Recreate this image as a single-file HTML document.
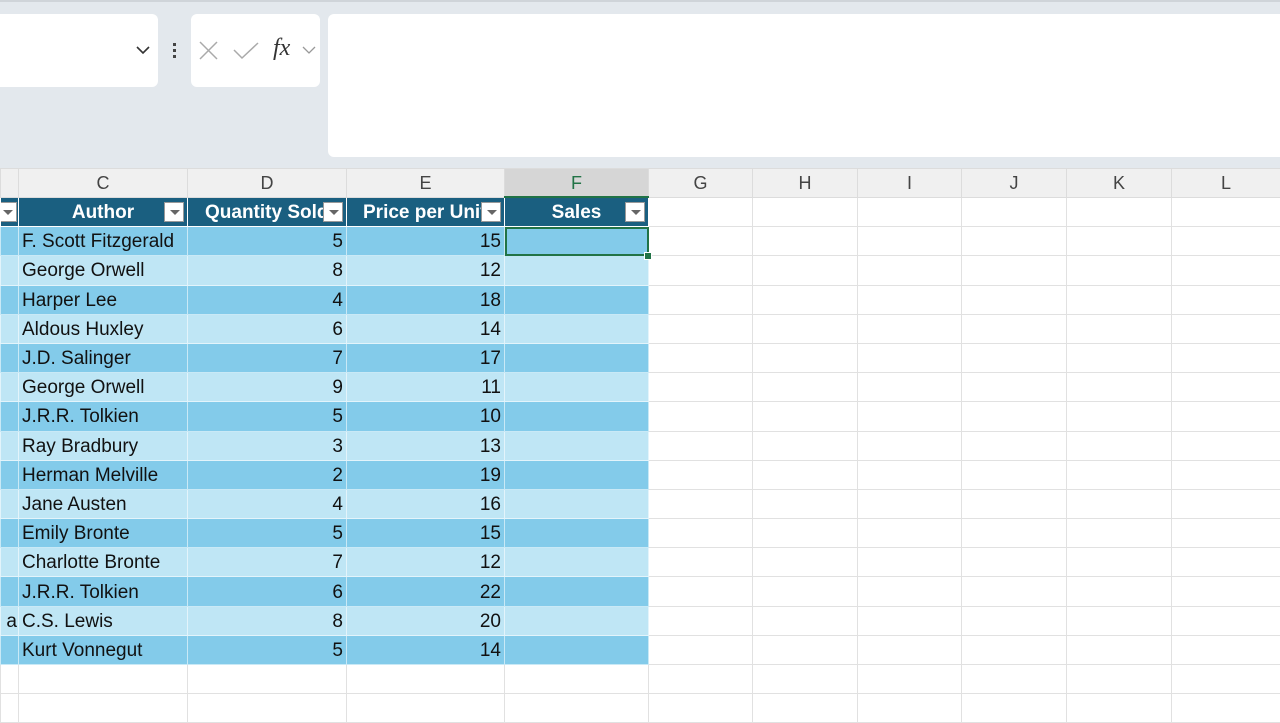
<!DOCTYPE html>
<html><head><meta charset="utf-8"><style>
body{margin:0;width:1280px;height:720px;overflow:hidden;background:#e3e8ed;font-family:"Liberation Sans",sans-serif;position:relative}
.box{position:absolute;background:#fff;border-radius:6px}
table{position:absolute;left:0;top:168px;border-collapse:collapse;table-layout:fixed;width:1280px;background:#fff}
td{padding:2px 3px 0;height:26.2px;border:1px solid #e1e1e1;font-size:19px;white-space:nowrap;overflow:hidden;color:#111}
tr.ch td{background:#f0f0f0;color:#444;text-align:center;font-size:18px;height:25px;border-color:#dcdcdc}
tr.ch td.sel{background:#d6d6d6;color:#217346;border-bottom:2px solid #217346}
tr.h td.t{background:#1a5f80;color:#fff;font-weight:bold;text-align:center;position:relative;border-color:#fff}
.fb{position:absolute;right:3px;top:4px;width:20px;height:20px;background:#fff;border:1px solid #999;box-sizing:border-box}
.fb:after{content:"";position:absolute;left:5px;top:7px;border-left:5px solid transparent;border-right:5px solid transparent;border-top:5px solid #666}
tr.a td.t{background:#83cbea;border-color:#c9e9f6}
tr.b td.t{background:#bfe6f5;border-color:#e3f4fb}
td.r{text-align:right}
</style></head><body>
<div style="position:absolute;left:0;top:0;width:1280px;height:2px;background:#cfd4d9"></div>
<div class="box" style="left:-10px;top:14px;width:168px;height:73px"></div>
<svg style="position:absolute;left:135px;top:44px" width="16" height="12"><path d="M2 3l6 6 6-6" fill="none" stroke="#333" stroke-width="1.6"/></svg>
<div style="position:absolute;left:173px;top:43px;width:3px;height:3px;background:#444;box-shadow:0 6px 0 #444,0 12px 0 #444"></div>
<div class="box" style="left:191px;top:14px;width:129px;height:73px"></div>
<svg style="position:absolute;left:198px;top:40px" width="24" height="22"><path d="M2 2l17 17M19 2L2 19" stroke="#aaa" stroke-width="1.5"/></svg>
<svg style="position:absolute;left:232px;top:40px" width="28" height="22"><path d="M2 10l8 8L26 3" fill="none" stroke="#aaa" stroke-width="1.5"/></svg>
<div style="position:absolute;left:273px;top:35px;font-family:'Liberation Serif',serif;font-style:italic;font-size:24px;color:#333">fx</div>
<svg style="position:absolute;left:302px;top:45px" width="14" height="10"><path d="M1 2l6 6 6-6" fill="none" stroke="#999" stroke-width="1.3"/></svg>
<div class="box" style="left:328px;top:14px;width:970px;height:143px"></div>
<table>
<colgroup><col style="width:18px"><col style="width:169px"><col style="width:159px"><col style="width:158px"><col style="width:144px"><col style="width:104px"><col style="width:105px"><col style="width:104px"><col style="width:105px"><col style="width:105px"><col style="width:109px"></colgroup>
<tr class="ch"><td></td><td>C</td><td>D</td><td>E</td><td class="sel">F</td><td>G</td><td>H</td><td>I</td><td>J</td><td>K</td><td>L</td></tr>
<tr class="h"><td class="t"><div class="fb" style="right:1px"></div></td><td class="t">Author<div class="fb"></div></td><td class="t" style="text-align:left;padding-left:17px">Quantity Sold<div class="fb"></div></td><td class="t" style="text-align:left;padding-left:16px">Price per Unit<div class="fb"></div></td><td class="t">Sales<div class="fb"></div></td><td></td><td></td><td></td><td></td><td></td><td></td></tr>
<tr class="a"><td class="t"></td><td class="t">F. Scott Fitzgerald</td><td class="t r">5</td><td class="t r">15</td><td class="t" style="outline:2px solid #217346;outline-offset:-2px"></td><td></td><td></td><td></td><td></td><td></td><td></td></tr>
<tr class="b"><td class="t"></td><td class="t">George Orwell</td><td class="t r">8</td><td class="t r">12</td><td class="t"></td><td></td><td></td><td></td><td></td><td></td><td></td></tr>
<tr class="a"><td class="t"></td><td class="t">Harper Lee</td><td class="t r">4</td><td class="t r">18</td><td class="t"></td><td></td><td></td><td></td><td></td><td></td><td></td></tr>
<tr class="b"><td class="t"></td><td class="t">Aldous Huxley</td><td class="t r">6</td><td class="t r">14</td><td class="t"></td><td></td><td></td><td></td><td></td><td></td><td></td></tr>
<tr class="a"><td class="t"></td><td class="t">J.D. Salinger</td><td class="t r">7</td><td class="t r">17</td><td class="t"></td><td></td><td></td><td></td><td></td><td></td><td></td></tr>
<tr class="b"><td class="t"></td><td class="t">George Orwell</td><td class="t r">9</td><td class="t r">11</td><td class="t"></td><td></td><td></td><td></td><td></td><td></td><td></td></tr>
<tr class="a"><td class="t"></td><td class="t">J.R.R. Tolkien</td><td class="t r">5</td><td class="t r">10</td><td class="t"></td><td></td><td></td><td></td><td></td><td></td><td></td></tr>
<tr class="b"><td class="t"></td><td class="t">Ray Bradbury</td><td class="t r">3</td><td class="t r">13</td><td class="t"></td><td></td><td></td><td></td><td></td><td></td><td></td></tr>
<tr class="a"><td class="t"></td><td class="t">Herman Melville</td><td class="t r">2</td><td class="t r">19</td><td class="t"></td><td></td><td></td><td></td><td></td><td></td><td></td></tr>
<tr class="b"><td class="t"></td><td class="t">Jane Austen</td><td class="t r">4</td><td class="t r">16</td><td class="t"></td><td></td><td></td><td></td><td></td><td></td><td></td></tr>
<tr class="a"><td class="t"></td><td class="t">Emily Bronte</td><td class="t r">5</td><td class="t r">15</td><td class="t"></td><td></td><td></td><td></td><td></td><td></td><td></td></tr>
<tr class="b"><td class="t"></td><td class="t">Charlotte Bronte</td><td class="t r">7</td><td class="t r">12</td><td class="t"></td><td></td><td></td><td></td><td></td><td></td><td></td></tr>
<tr class="a"><td class="t"></td><td class="t">J.R.R. Tolkien</td><td class="t r">6</td><td class="t r">22</td><td class="t"></td><td></td><td></td><td></td><td></td><td></td><td></td></tr>
<tr class="b"><td class="t r" style="padding:2px 1px 0">a</td><td class="t">C.S. Lewis</td><td class="t r">8</td><td class="t r">20</td><td class="t"></td><td></td><td></td><td></td><td></td><td></td><td></td></tr>
<tr class="a"><td class="t"></td><td class="t">Kurt Vonnegut</td><td class="t r">5</td><td class="t r">14</td><td class="t"></td><td></td><td></td><td></td><td></td><td></td><td></td></tr>
<tr><td></td><td></td><td></td><td></td><td></td><td></td><td></td><td></td><td></td><td></td><td></td></tr>
<tr><td></td><td></td><td></td><td></td><td></td><td></td><td></td><td></td><td></td><td></td><td></td></tr>
</table>
<div style="position:absolute;left:644px;top:252px;width:6px;height:6px;background:#217346;border:1px solid #fff"></div>
</body></html>
